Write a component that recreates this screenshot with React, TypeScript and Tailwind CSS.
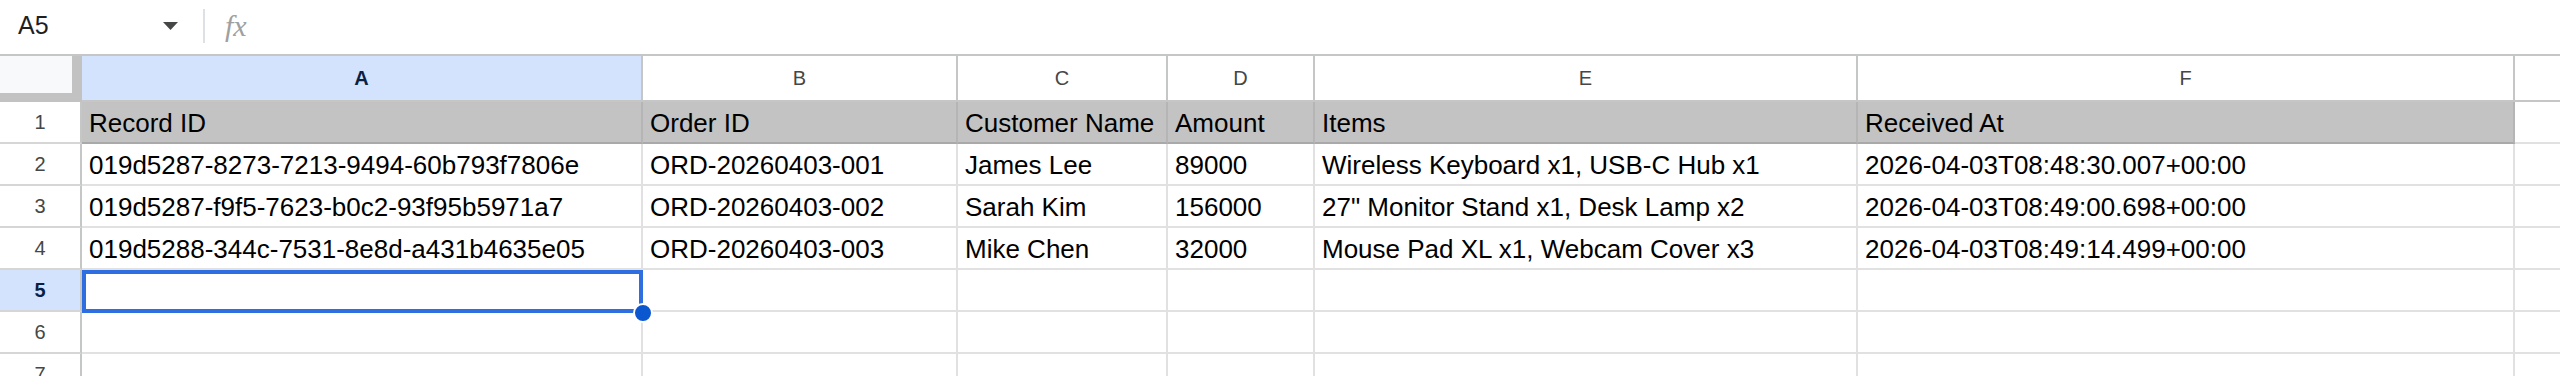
import React from "react";

type Col = { key: string; width: string };

const cols: Col[] = [
  { key: "A", width: "w-[561px]" },
  { key: "B", width: "w-[315px]" },
  { key: "C", width: "w-[210px]" },
  { key: "D", width: "w-[147px]" },
  { key: "E", width: "w-[543px]" },
  { key: "F", width: "w-[657px]" },
];

const rows: string[][] = [
  ["Record ID", "Order ID", "Customer Name", "Amount", "Items", "Received At"],
  [
    "019d5287-8273-7213-9494-60b793f7806e",
    "ORD-20260403-001",
    "James Lee",
    "89000",
    "Wireless Keyboard x1, USB-C Hub x1",
    "2026-04-03T08:48:30.007+00:00",
  ],
  [
    "019d5287-f9f5-7623-b0c2-93f95b5971a7",
    "ORD-20260403-002",
    "Sarah Kim",
    "156000",
    '27" Monitor Stand x1, Desk Lamp x2',
    "2026-04-03T08:49:00.698+00:00",
  ],
  [
    "019d5288-344c-7531-8e8d-a431b4635e05",
    "ORD-20260403-003",
    "Mike Chen",
    "32000",
    "Mouse Pad XL x1, Webcam Cover x3",
    "2026-04-03T08:49:14.499+00:00",
  ],
  ["", "", "", "", "", ""],
  ["", "", "", "", "", ""],
  ["", "", "", "", "", ""],
];

function FormulaBar() {
  return (
    <div className="flex h-[54px] items-center pb-[3px]">
      <div className="w-[163px] pl-[18px] text-[25px] leading-none text-[#1f1f1f]">A5</div>
      <svg width="15" height="8" viewBox="0 0 15 8">
        <path d="M0 0 L15 0 L7.5 8 Z" fill="#444746" />
      </svg>
      <div className="ml-[25px] h-[34px] w-[2px] bg-[#dde1e5]" />
      <span className="ml-[20px] font-['Liberation_Serif',serif] text-[30px] italic leading-none text-[#a0a0a0]">
        fx
      </span>
    </div>
  );
}

export default function App() {
  return (
    <div className="h-[376px] w-[2560px] overflow-hidden bg-white font-['Liberation_Sans',Arial,sans-serif] text-black">
      <FormulaBar />
      <div className="h-[2px] bg-[#c4c7c5]" />
      <div className="relative">
        {/* column letters */}
        <div className="flex h-[46px]">
          <div className="h-[46px] w-[82px] bg-[#c2c2c2]">
            <div className="h-[37px] w-[72px] bg-[#f8f9fa]" />
          </div>
          {cols.map((c) => (
            <div
              key={c.key}
              className={`${c.width} flex h-[46px] items-center justify-center border-r-2 border-b-2 border-[#c4c7c5] text-[20px] ${
                c.key === "A" ? "bg-[#d3e3fd] font-bold text-[#0b1f44]" : "bg-white text-[#444746]"
              }`}
            >
              {c.key}
            </div>
          ))}
          <div className="h-[46px] flex-1 border-b-2 border-[#c4c7c5]" />
        </div>

        {rows.map((r, i) => {
          const head = i === 0;
          const selected = i === 4;
          return (
            <div key={i} className="flex h-[42px]">
              <div
                className={`flex h-[42px] w-[82px] items-center justify-center border-r-2 border-b-2 border-r-[#c4c7c5] border-b-[#d6d6d6] text-[20px] ${
                  selected ? "bg-[#d3e3fd] font-bold text-[#0b1f44]" : "bg-white text-[#444746]"
                }`}
              >
                {i + 1}
              </div>
              {cols.map((c, j) => (
                <div
                  key={c.key}
                  className={`${c.width} h-[42px] overflow-hidden whitespace-nowrap border-r-2 border-b-2 pl-[7px] pt-[2px] text-[26px] leading-[38px] ${
                    head
                      ? "border-r-[#b5b5b5] border-b-[#a9a9a9] bg-[#c3c3c3]"
                      : "border-[#e1e1e1] bg-white"
                  }`}
                >
                  {r[j]}
                </div>
              ))}
              <div className="h-[42px] flex-1 border-b-2 border-[#e1e1e1]" />
            </div>
          );
        })}

        {/* active cell A5 */}
        <div className="pointer-events-none absolute left-[82px] top-[214px] h-[43px] w-[561px] border-[4px] border-[#2f6ee0]" />
        <div className="pointer-events-none absolute left-[633px] top-[247px] h-[20px] w-[20px] rounded-full border-2 border-white bg-[#0b57d0]" />
      </div>
    </div>
  );
}
